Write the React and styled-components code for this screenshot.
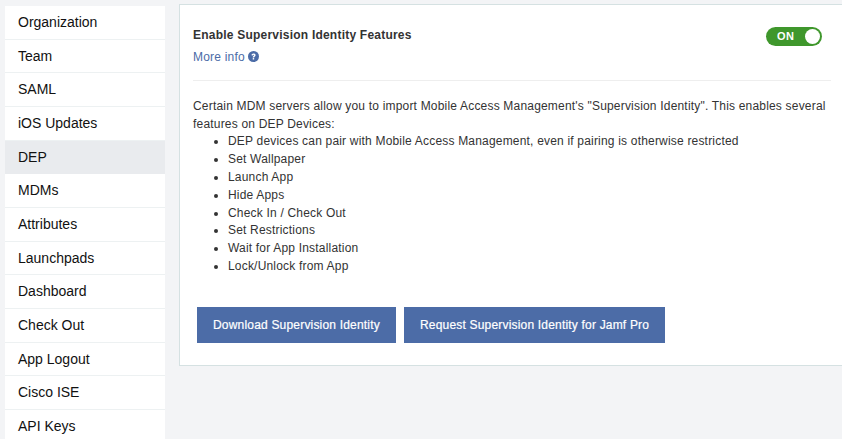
import React from 'react';
import styled, { createGlobalStyle } from 'styled-components';

const Global = createGlobalStyle`
  html, body {
    margin: 0;
    height: 100%;
    overflow: hidden;
    background: #f3f4f6;
    font-family: "Liberation Sans", Arial, sans-serif;
  }
`;

const Page = styled.div`
  display: flex;
  align-items: flex-start;
  gap: 14px;
  height: 439px;
  padding: 4px 0 0 5px;
  box-sizing: border-box;
  overflow: hidden;
`;

const Sidebar = styled.nav`
  flex: 0 0 160px;
  margin-top: 2px;
  background: #fff;
`;

const NavItem = styled.div`
  height: 33.67px;
  box-sizing: border-box;
  padding: 7px 0 0 13px;
  font-size: 14px;
  line-height: 18px;
  color: #111;
  background: ${p => (p.$active ? '#e9ebee' : '#fff')};
  border-bottom: 1px solid ${p => (p.$active ? '#e9ebee' : '#edf1f2')};
`;

const Card = styled.section`
  flex: 1;
  height: 362px;
  box-sizing: border-box;
  margin-right: -1px;
  padding: 22px 11px 0 13px;
  background: #fff;
  border: 1px solid #d5e1e2;
`;

const Header = styled.header`
  display: flex;
  justify-content: space-between;
  height: 53px;
  border-bottom: 1px solid #eeeeee;
`;

const Title = styled.div`
  font-size: 12px;
  line-height: 16px;
  font-weight: bold;
  letter-spacing: 0.22px;
  color: #333;
`;

const MoreInfo = styled.a`
  display: flex;
  align-items: center;
  gap: 3px;
  margin-top: 6px;
  font-size: 12px;
  line-height: 16px;
  letter-spacing: 0.2px;
  color: #4c6ca7;

  svg {
    margin-top: -1px;
  }
`;

const Toggle = styled.div`
  position: relative;
  width: 56px;
  height: 19px;
  margin: 0 9px 0 0;
  border-radius: 10px;
  background: #3f972c;
  color: #fff;
  font-size: 11px;
  font-weight: bold;
  line-height: 19px;
  letter-spacing: 0.4px;
  padding-left: 11px;
  box-sizing: border-box;
`;

const Knob = styled.span`
  position: absolute;
  top: 2px;
  right: 2px;
  width: 15px;
  height: 15px;
  border-radius: 50%;
  background: #fff;
`;

const Body = styled.div`
  margin-top: 17px;
  font-size: 12px;
  line-height: 17.8px;
  letter-spacing: 0.19px;
  color: #333;
`;

const Features = styled.ul`
  margin: -0.25px 0 0;
  padding: 0 0 0 35px;
`;

const Actions = styled.div`
  display: flex;
  gap: 8px;
  margin: 31.25px 0 0 4px;
`;

const Button = styled.button`
  height: 36px;
  padding: 0 16px;
  border: 0;
  background: #4c6ca7;
  color: #fff;
  font-family: inherit;
  font-size: 12px;
  letter-spacing: 0.19px;
  -webkit-text-stroke: 0.2px #fff;
`;

const HelpIcon = () => (
  <svg width="11" height="11" viewBox="0 0 24 24">
    <circle cx="12" cy="12" r="12" fill="#4c6ca7" />
    <path d="M7.6 9.4c0-2.7 2-4.2 4.5-4.2 2.5 0 4.4 1.5 4.4 3.8 0 3-3 3-3 5.2h-3.2c0-3.6 3-3.6 3-4.9 0-.6-.5-1-1.2-1-.8 0-1.2.5-1.3 1.3z" fill="#fff" />
    <rect x="10.3" y="15.4" width="3.2" height="3.2" fill="#fff" />
  </svg>
);

const navItems = ['Organization', 'Team', 'SAML', 'iOS Updates', 'DEP', 'MDMs', 'Attributes', 'Launchpads', 'Dashboard', 'Check Out', 'App Logout', 'Cisco ISE', 'API Keys'];

const features = [
  'DEP devices can pair with Mobile Access Management, even if pairing is otherwise restricted',
  'Set Wallpaper',
  'Launch App',
  'Hide Apps',
  'Check In / Check Out',
  'Set Restrictions',
  'Wait for App Installation',
  'Lock/Unlock from App',
];

export default function App() {
  return (
    <Page>
      <Global />
      <Sidebar>
        {navItems.map(item => (
          <NavItem key={item} $active={item === 'DEP'}>{item}</NavItem>
        ))}
      </Sidebar>
      <Card>
        <Header>
          <div>
            <Title>Enable Supervision Identity Features</Title>
            <MoreInfo>More info <HelpIcon /></MoreInfo>
          </div>
          <Toggle>ON<Knob /></Toggle>
        </Header>
        <Body>
          Certain MDM servers allow you to import Mobile Access Management's "Supervision Identity". This enables several features on DEP Devices:
          <Features>
            {features.map(f => <li key={f}>{f}</li>)}
          </Features>
        </Body>
        <Actions>
          <Button>Download Supervision Identity</Button>
          <Button>Request Supervision Identity for Jamf Pro</Button>
        </Actions>
      </Card>
    </Page>
  );
}
